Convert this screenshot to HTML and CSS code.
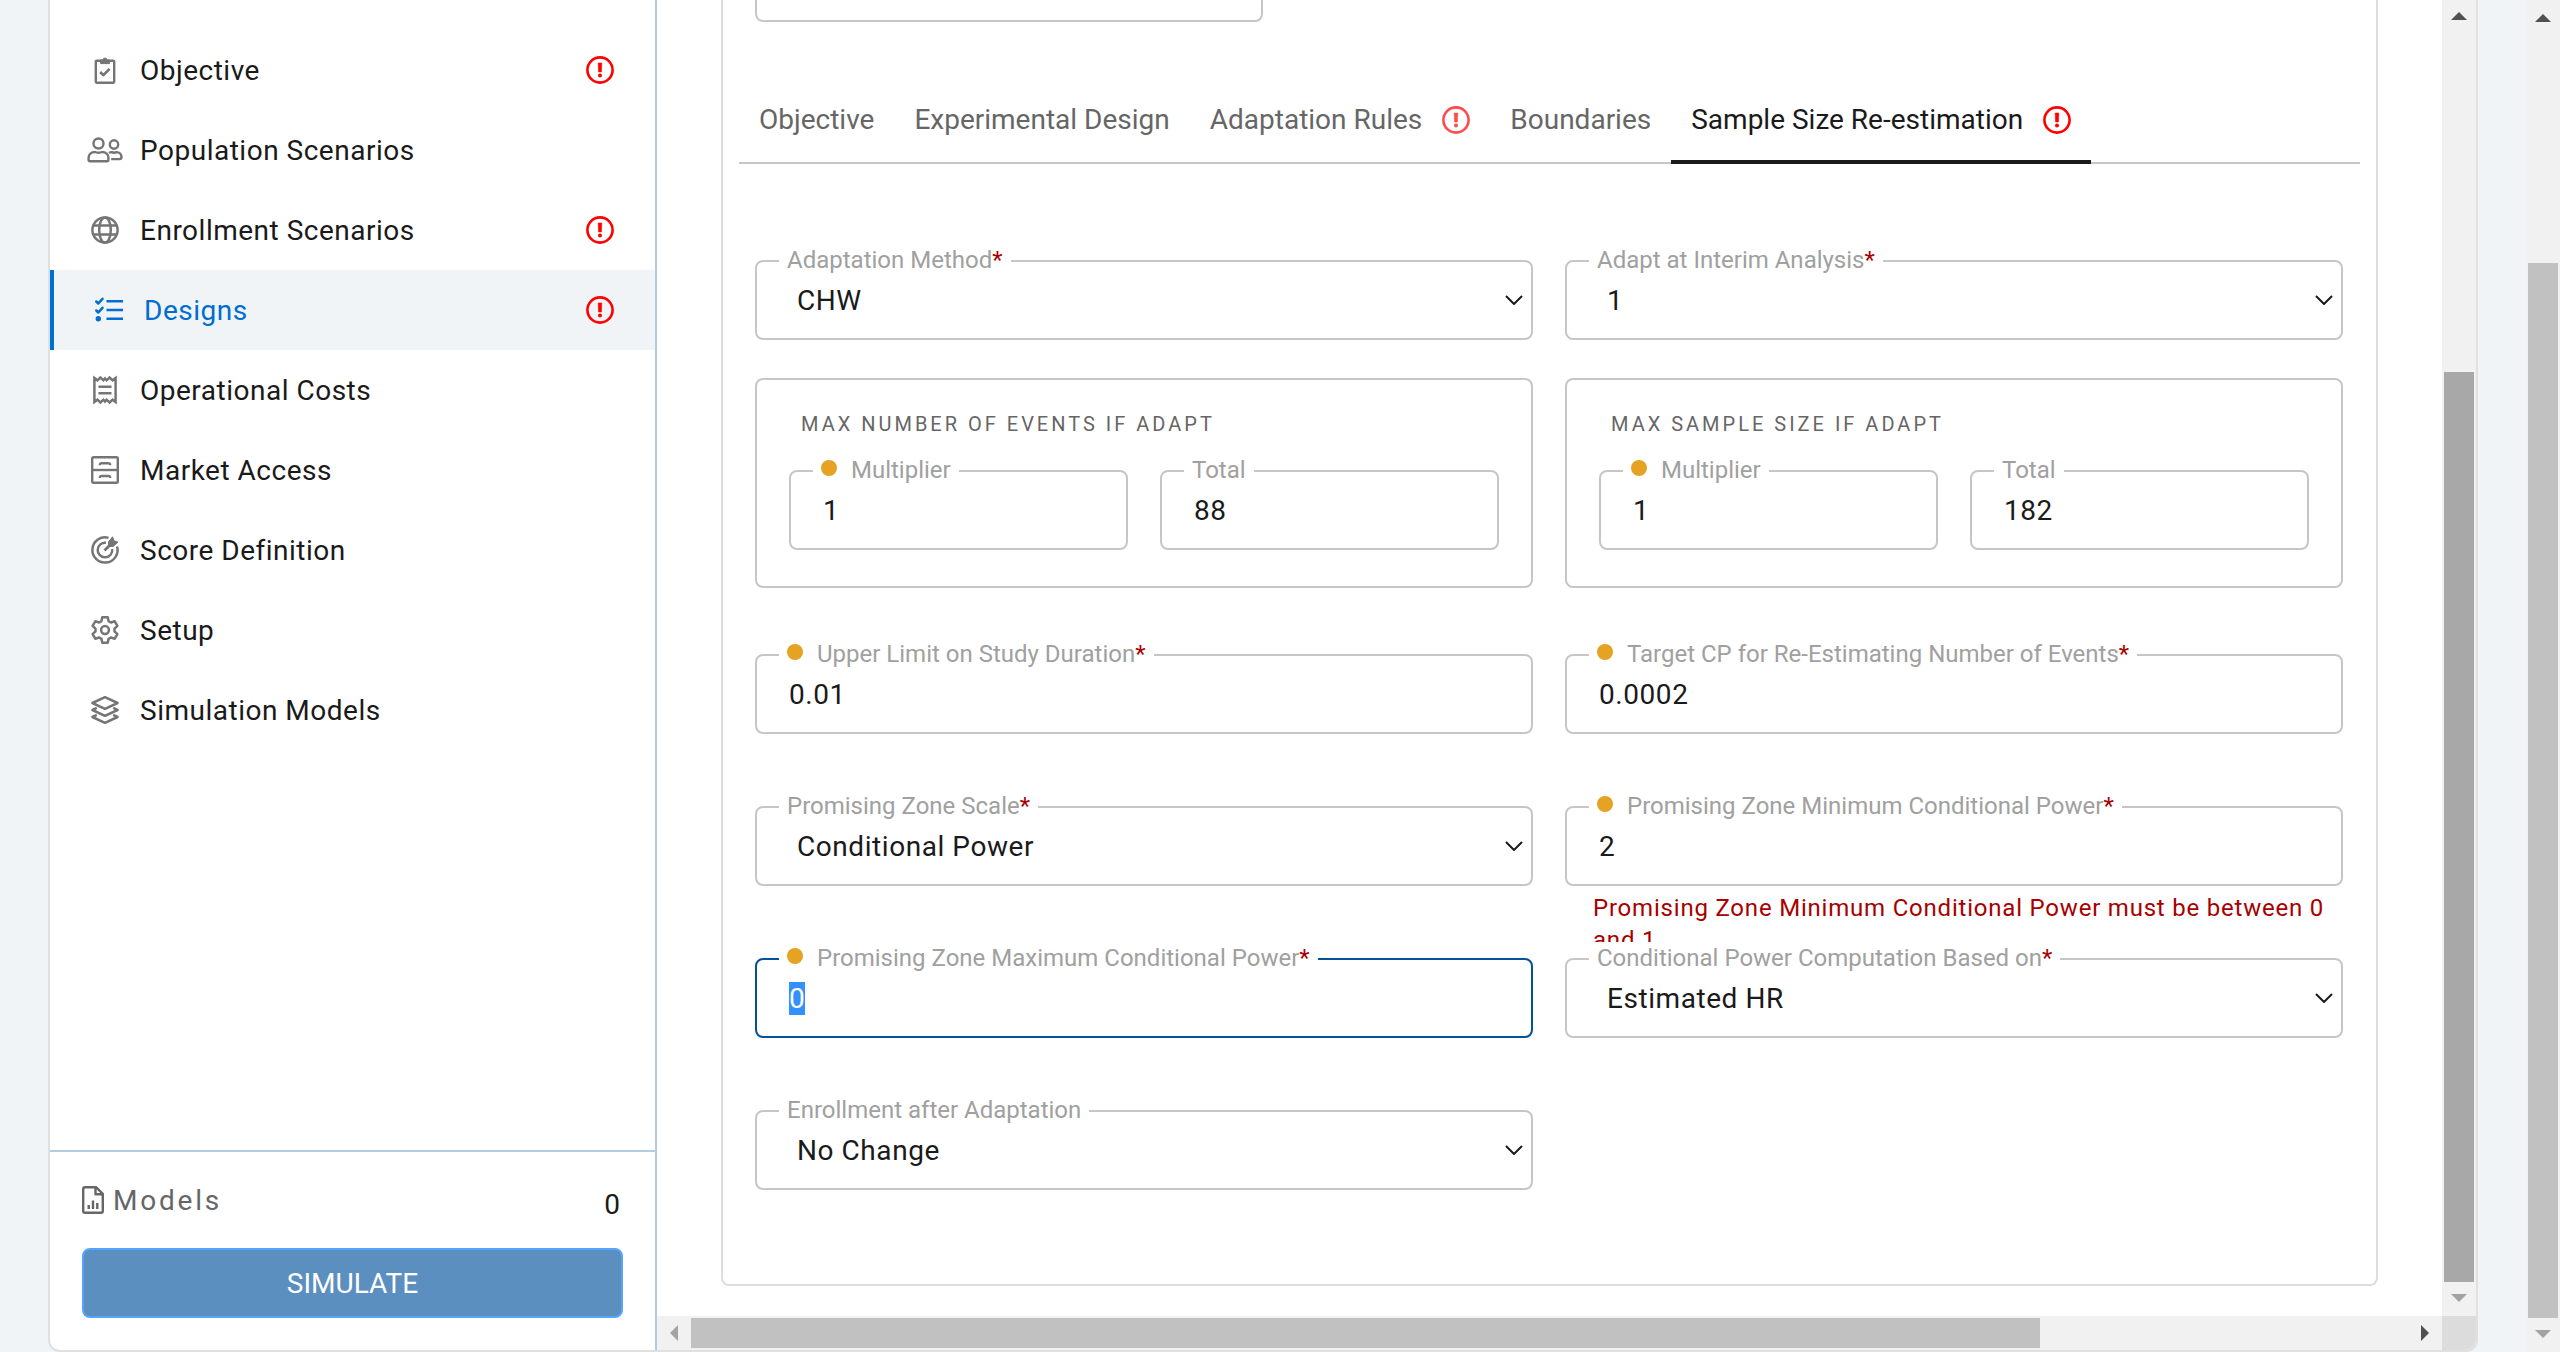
FILE: index.html
```html
<!DOCTYPE html>
<html lang="en">
<head>
<meta charset="utf-8">
<title>Designs</title>
<link rel="stylesheet" href="styles.css">
</head>
<body>
<svg class="sprite" aria-hidden="true">
  <symbol id="alert" viewBox="0 0 28 28">
    <circle cx="14" cy="14" r="12.6" fill="none" stroke="currentColor" stroke-width="2.6"/>
    <path d="M12.2 7h3.6l-.4 9h-2.8z" fill="currentColor" stroke="currentColor" stroke-width=".6" stroke-linejoin="round"/>
    <circle cx="14" cy="19.5" r="2" fill="currentColor"/>
  </symbol>
</svg>
<div class="app">
  <div class="card">
    <aside class="sidebar">
      <nav class="menu">
        <a class="item" href="#objective">
          <svg class="icon" viewBox="0 0 36 28" fill="none" stroke="currentColor" stroke-width="2.4" stroke-linejoin="round"><path d="M13.500 4.700H9.700a.9.900 0 0 0-.9.900v20.200c0 .5.400.9.900.9h16.600c.5 0 .9-.4.900-.9V5.600a.9.900 0 0 0-.9-.9h-3.800"/><path d="M13.500 7.600V3.800h2.200a2.400 2.400 0 0 1 4.600 0h2.200v3.800z" fill="currentColor" stroke-width="1"/><path d="m13.200 16 3.200 3.200 6.200-6.400" stroke-width="2.600"/></svg>
          <span class="name">Objective</span><svg class="alert"><use href="#alert"/></svg>
        </a>
        <a class="item" href="#population">
          <svg class="icon" viewBox="0 0 36 28" fill="none" stroke="currentColor" stroke-width="2.400" stroke-linejoin="round"><circle cx="11.500" cy="7.500" r="5"/><circle cx="27" cy="8.500" r="4.200"/><path d="M8 16c1.600.9 5.400.9 7 0 3.800 0 6.400 2.600 6.400 5.800v2c0 .8-.6 1.400-1.400 1.400H3c-.8 0-1.400-.6-1.400-1.400v-2C1.600 18.600 4.200 16 8 16z"/><path d="M22 17c.9-.7 2-.9 2.700-.9 1.500.7 3.400.7 4.800 0 3 .1 5 2.200 5 5 0 1.200-.7 2-1.800 2h-8.500"/></svg>
          <span class="name">Population Scenarios</span>
        </a>
        <a class="item" href="#enrollment">
          <svg class="icon" viewBox="0 0 36 28" fill="none" stroke="currentColor" stroke-width="2.500"><circle cx="18" cy="14" r="12.600"/><ellipse cx="18" cy="14" rx="5.800" ry="12.600"/><path d="M6 9.500h24M6 18.500h24"/></svg>
          <span class="name">Enrollment Scenarios</span><svg class="alert"><use href="#alert"/></svg>
        </a>
        <a class="item current" href="#designs" aria-current="page">
          <svg class="icon" viewBox="0 0 36 28" fill="none" stroke="currentColor" stroke-width="2.600" stroke-linecap="round" stroke-linejoin="round"><path d="M15.500 5.300H32M15.500 14H32M15.500 22.700H32" stroke-linecap="butt"/><path d="m5.300 5.500 2 2 4.200-4.700M5.300 14.500l2 2 4.200-4.700" stroke-width="2.500"/><circle cx="7.300" cy="22.700" r="2.700" fill="currentColor" stroke="none"/></svg>
          <span class="name">Designs</span><svg class="alert"><use href="#alert"/></svg>
        </a>
        <a class="item" href="#costs">
          <svg class="icon" viewBox="0 0 36 28" fill="none" stroke="currentColor" stroke-width="2.500"><path d="M7.400 2l3 2.300 3-2.800 3 2.800 1.600-1.800 1.600 1.800 3-2.800 3 2.800 3-2.300v24l-3-2.300-3 2.800-3-2.800-1.600 1.800-1.600-1.800-3 2.800-3-2.800-3 2.300z"/><path d="M11.500 10.700h13M11.500 17.300h13"/></svg>
          <span class="name">Operational Costs</span>
        </a>
        <a class="item" href="#market">
          <svg class="icon" viewBox="0 0 36 28" fill="none" stroke="currentColor" stroke-width="2.400" stroke-linejoin="round"><rect x="5.200" y="1.200" width="25.600" height="25.600" rx="1.500"/><path d="M5 14h26"/><path d="M12.800 9.300c0-2 .6-2 2-2h6.400c1.400 0 2 0 2 2M12.800 22c0-2 .6-2 2-2h6.400c1.400 0 2 0 2 2"/></svg>
          <span class="name">Market Access</span>
        </a>
        <a class="item" href="#score">
          <svg class="icon" viewBox="0 0 36 28" fill="none" stroke="currentColor" stroke-width="2.500"><path d="M21.500 1.900A12.600 12.600 0 1 0 30.100 10.500"/><path d="M19 6.800A7.300 7.300 0 1 0 25.200 13"/><path d="m17.500 14.500 6.500-6.500" stroke-width="2.800"/><path d="M21.500 5.800 25.600.8l1.400 4 4 1.400-5 4.300-4.500-.2z" fill="currentColor" stroke-width="1" stroke-linejoin="round"/></svg>
          <span class="name">Score Definition</span>
        </a>
        <a class="item" href="#setup">
          <svg class="icon" viewBox="0 0 36 28" fill="none" stroke="currentColor" stroke-width="2.500" stroke-linejoin="round"><path d="M15.300 1.300h5.400l.9 3.900 2.200 1.300 3.900-1.200 2.700 4.600-2.900 2.800v2.600l2.900 2.800-2.700 4.600-3.900-1.200-2.200 1.300-.9 3.900h-5.400l-.9-3.900-2.200-1.300-3.900 1.200-2.700-4.600 2.900-2.800v-2.600l-2.900-2.800 2.700-4.600 3.900 1.200 2.200-1.300z"/><circle cx="18" cy="14" r="3.900"/></svg>
          <span class="name">Setup</span>
        </a>
        <a class="item" href="#models">
          <svg class="icon" viewBox="0 0 36 28" fill="none" stroke="currentColor" stroke-width="2.500" stroke-linejoin="round"><path d="M18 1.200 30.600 7 18 12.800 5.400 7z"/><path d="m9.800 11.900-4.400 2.100L18 19.800 30.600 14l-4.400-2.100"/><path d="m9.800 18.900-4.400 2.100L18 26.800 30.600 21l-4.400-2.100"/></svg>
          <span class="name">Simulation Models</span>
        </a>
      </nav>
      <div class="summary">
        <div class="models">
          <span class="models-name"><svg class="file" viewBox="0 0 22 28" fill="none" stroke="currentColor" stroke-width="2.400" stroke-linejoin="round"><path d="M14 1.200H3A1.800 1.800 0 0 0 1.200 3v22c0 1 .8 1.800 1.800 1.800h16c1 0 1.800-.8 1.800-1.800V7.800z"/><path d="M13.500 1.500v6.700h7"/><path d="M6.700 23v-4M11 23v-8.500M15.300 23v-6"/></svg><span class="text">Models</span></span>
          <span class="count">0</span>
        </div>
        <button class="simulate" type="button">SIMULATE</button>
      </div>
    </aside>
    <main class="main">
      <div class="content">
        <section class="panel">
          <input class="stub" type="text" aria-label="Design name">
          <nav class="tabs">
            <a class="tab" href="#t1">Objective</a>
            <a class="tab" href="#t2">Experimental Design</a>
            <a class="tab" href="#t3">Adaptation Rules <svg class="alert faded"><use href="#alert"/></svg></a>
            <a class="tab" href="#t4">Boundaries</a>
            <a class="tab active" href="#t5" aria-current="true">Sample Size Re-estimation <svg class="alert"><use href="#alert"/></svg></a>
          </nav>
          <form class="form">
            <div class="grid top">
              <div class="field">
                <label for="method">Adaptation Method<b>*</b></label>
                <select id="method"><option>CHW</option></select>
                <svg class="chevron" viewBox="0 0 18 10"><path d="m1 1 8 8 8-8"/></svg>
              </div>
              <div class="field">
                <label for="interim">Adapt at Interim Analysis<b>*</b></label>
                <select id="interim"><option>1</option></select>
                <svg class="chevron" viewBox="0 0 18 10"><path d="m1 1 8 8 8-8"/></svg>
              </div>
              <section class="box">
                <h2>MAX NUMBER OF EVENTS IF ADAPT</h2>
                <div class="grid">
                  <div class="field"><label for="m1"><i></i>Multiplier</label><input id="m1" type="text" value="1"></div>
                  <div class="field"><label for="n1">Total</label><input id="n1" type="text" value="88"></div>
                </div>
              </section>
              <section class="box">
                <h2>MAX SAMPLE SIZE IF ADAPT</h2>
                <div class="grid">
                  <div class="field"><label for="m2"><i></i>Multiplier</label><input id="m2" type="text" value="1"></div>
                  <div class="field"><label for="n2">Total</label><input id="n2" type="text" value="182"></div>
                </div>
              </section>
            </div>
            <div class="grid rows">
              <div class="cell">
                <div class="field"><label for="limit"><i></i>Upper Limit on Study Duration<b>*</b></label><input id="limit" type="text" value="0.01"></div>
              </div>
              <div class="cell">
                <div class="field"><label for="target"><i></i>Target CP for Re-Estimating Number of Events<b>*</b></label><input id="target" type="text" value="0.0002"></div>
              </div>
              <div class="cell">
                <div class="field">
                  <label for="scale">Promising Zone Scale<b>*</b></label>
                  <select id="scale"><option>Conditional Power</option></select>
                  <svg class="chevron" viewBox="0 0 18 10"><path d="m1 1 8 8 8-8"/></svg>
                </div>
              </div>
              <div class="cell">
                <div class="field"><label for="min"><i></i>Promising Zone Minimum Conditional Power<b>*</b></label><input id="min" type="text" value="2" aria-describedby="min-error"></div>
                <p class="error" id="min-error">Promising Zone Minimum Conditional Power must be between 0 and 1</p>
              </div>
              <div class="cell">
                <div class="field focused"><label for="max"><i></i>Promising Zone Maximum Conditional Power<b>*</b></label><input id="max" type="text" value="0"></div>
              </div>
              <div class="cell">
                <div class="field">
                  <label for="based">Conditional Power Computation Based on<b>*</b></label>
                  <select id="based"><option>Estimated HR</option></select>
                  <svg class="chevron" viewBox="0 0 18 10"><path d="m1 1 8 8 8-8"/></svg>
                </div>
              </div>
              <div class="cell">
                <div class="field">
                  <label for="after">Enrollment after Adaptation</label>
                  <select id="after"><option>No Change</option></select>
                  <svg class="chevron" viewBox="0 0 18 10"><path d="m1 1 8 8 8-8"/></svg>
                </div>
              </div>
            </div>
          </form>
        </section>
      </div>
      <div class="bar vertical inner">
        <svg class="arrow" viewBox="0 0 16 8"><path d="M0 8 8 0l8 8z"/></svg>
        <span class="thumb"></span>
        <svg class="arrow off" viewBox="0 0 16 8"><path d="M0 0h16L8 8z"/></svg>
      </div>
      <div class="bar horizontal">
        <svg class="arrow side off" viewBox="0 0 8 16"><path d="M8 0v16L0 8z"/></svg>
        <span class="track"><span class="thumb"></span></span>
        <svg class="arrow side" viewBox="0 0 8 16"><path d="M0 0v16l8-8z"/></svg>
      </div>
      <div class="corner"></div>
    </main>
  </div>
  <div class="bar vertical outer">
    <svg class="arrow" viewBox="0 0 16 8"><path d="M0 8 8 0l8 8z"/></svg>
    <span class="thumb"></span>
    <svg class="arrow off" viewBox="0 0 16 8"><path d="M0 0h16L8 8z"/></svg>
  </div>
</div>
<script src="script.js"></script>
</body>
</html>
```
FILE: styles.css
```css
* { box-sizing: border-box; }

body {
  margin: 0;
  background: #f0f4f7;
  color: #1a1a1a;
  font: 28px/34px Roboto, "Liberation Sans", sans-serif;
}

a { color: inherit; text-decoration: none; }
.sprite { display: none; }

.app { display: flex; height: 100vh; padding-left: 48px; }

.card {
  flex: 1;
  display: flex;
  min-width: 0;
  margin-right: 48px;
  border: 2px solid #e0e0e0;
  border-top: 0;
  border-radius: 0 0 12px 12px;
  background: #fff;
  overflow: hidden;
}

/* Sidebar */
.sidebar {
  flex: none;
  display: flex;
  flex-direction: column;
  width: 607px;
  border-right: 2px solid #b3cbdf;
}

.menu { flex: 1; padding-top: 30px; }

.item {
  display: flex;
  align-items: center;
  height: 80px;
  padding: 0 41px 0 37px;
  letter-spacing: 0.018em;
}

.name { flex: 1; padding-top: 2px; }
.icon { width: 36px; height: 28px; margin-right: 17px; color: #757575; overflow: visible; }
.alert { width: 28px; height: 28px; color: #f00; overflow: visible; }
.faded { opacity: 0.7; }

.current { border-left: 4px solid #006dd0; background: #f0f4f7; color: #006dd0; }
.current .icon { color: #006dd0; }

.summary { padding: 32px; border-top: 2px solid #b3cde0; }
.models { display: flex; justify-content: space-between; height: 64px; }
.models-name { display: flex; align-items: center; height: 32px; gap: 9px; color: #666; letter-spacing: 0.1em; }
.text { padding-top: 2px; }
.count { padding: 4px 3px 0; }
.file { width: 22px; height: 28px; }

.simulate {
  display: block;
  width: 100%;
  height: 70px;
  padding: 2px 0 0;
  border: 2px solid #55a5ff;
  border-radius: 8px;
  background: #5b8fbf;
  color: #fff;
  font: inherit;
}

/* Scrolling area */
.main {
  flex: 1;
  display: grid;
  grid-template-columns: minmax(0, 1fr) 34px;
  grid-template-rows: minmax(0, 1fr) 34px;
  min-width: 0;
}

.content { padding: 0 64px 30px; overflow: hidden; }

.panel {
  padding: 0 16px 22px;
  border: 2px solid #ddd;
  border-top: 0;
  border-radius: 0 0 8px 8px;
}

.stub {
  display: block;
  width: 508px;
  height: 22px;
  margin-left: 16px;
  border: 2px solid #c6c6c6;
  border-top: 0;
  border-radius: 0 0 8px 8px;
}

.tabs { display: flex; margin-top: 56px; box-shadow: inset 0 -2px #c6c6c6; }

.tab {
  display: flex;
  align-items: center;
  gap: 20px;
  height: 86px;
  padding: 2px 20px 0;
  border-bottom: 4px solid transparent;
  color: #666;
  white-space: nowrap;
}

.active { border-color: #1a1a1a; color: #1a1a1a; }

/* Form */
.form { margin-top: 96px; padding: 0 17px 0 16px; }
.grid { display: grid; grid-template-columns: repeat(2, minmax(0, 1fr)); gap: 32px; }
.top { row-gap: 38px; }
.rows { row-gap: 0; margin-top: 66px; }
.cell { height: 152px; }

.field {
  position: relative;
  height: 80px;
  border: 2px solid #c6c6c6;
  border-radius: 8px;
}

.field label {
  position: absolute;
  top: -18px;
  left: 22px;
  display: flex;
  align-items: center;
  padding: 0 8px;
  background: #fff;
  color: #a0a0a0;
  font-size: 24px;
  line-height: 32px;
  white-space: nowrap;
}

.field b { color: #a80000; font-weight: 400; }
.field i { width: 16px; height: 16px; margin: 0 14px 4px 0; border-radius: 50%; background: #e6a223; }

.field input,
.field select {
  display: block;
  width: 100%;
  height: 76px;
  padding: 0 32px;
  border: 0;
  border-radius: 8px;
  outline: 0;
  background: transparent;
  color: #1a1a1a;
  font: inherit;
  letter-spacing: 0.02em;
  appearance: none;
}

.field select { padding: 2px 40px 0; }
.field ::selection { background: #3390ff; color: #fff; }

.chevron {
  position: absolute;
  top: 33px;
  right: 8px;
  width: 18px;
  height: 10px;
  fill: none;
  stroke: #1a1a1a;
  stroke-width: 2;
  pointer-events: none;
}

.focused { border-color: #00529b; }

.box { padding: 32px 32px 36px; border: 2px solid #c6c6c6; border-radius: 8px; }

.box h2 {
  margin: 0 0 34px;
  padding-left: 12px;
  color: #666;
  font-size: 20px;
  font-weight: 400;
  line-height: 24px;
  letter-spacing: 3px;
}

.error {
  height: 56px;
  margin: 0;
  padding: 6px 0 0 28px;
  overflow: hidden;
  color: #a80000;
  font-size: 24px;
  line-height: 32px;
  letter-spacing: 0.033em;
}

/* Scroll bars */
.bar { display: flex; align-items: center; background: #f1f1f1; }
.arrow { flex: none; width: 16px; height: 8px; fill: #505050; }
.side { width: 8px; height: 16px; }
.off { fill: #a3a3a3; }
.vertical { flex-direction: column; }
.vertical .thumb { flex: 1; width: 30px; background: #c1c1c1; }
.inner { padding: 12px 0 14px; }
.inner .thumb { margin: 352px 0 12px; background: #a8a8a8; }
.outer { flex: none; width: 34px; padding: 14px 0; }
.outer .thumb { margin: 241px 0 12px; }
.horizontal { padding: 0 13px; }
.track { flex: 1; padding: 0 12px 0 13px; }
.horizontal .thumb { display: block; width: 78.5%; height: 30px; background: #c1c1c1; }
.corner { background: #dcdcdc; }
```
FILE: script.js
```js
// The field being edited opens with its value selected.
const active = document.getElementById('max');
active.focus({ preventScroll: true });
active.select();
```
